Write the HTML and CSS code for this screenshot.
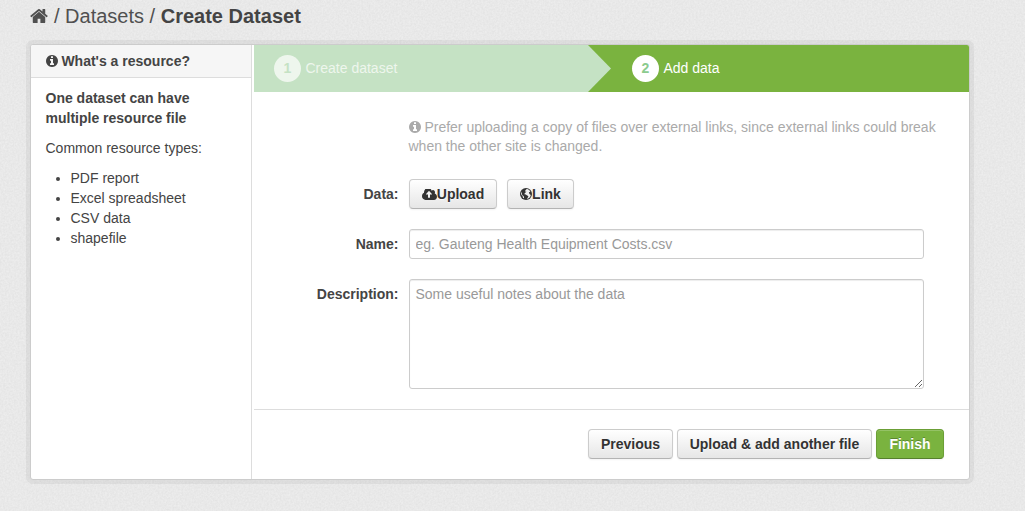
FILE: index.html
```html
<!DOCTYPE html>
<html lang="en">
<head>
<meta charset="utf-8">
<title>Create Dataset</title>
<link rel="stylesheet" href="styles.css">
</head>
<body>
<svg class="texture" aria-hidden="true">
  <filter id="grain" x="0" y="0" width="100%" height="100%" color-interpolation-filters="sRGB">
    <feTurbulence type="fractalNoise" baseFrequency="0.55" numOctaves="2" seed="4"/>
    <feColorMatrix values="0.06 0 0 0 0.882  0.06 0 0 0 0.882  0.06 0 0 0 0.882  0 0 0 0 1"/>
  </filter>
  <rect width="100%" height="100%" filter="url(#grain)"/>
</svg>
<svg class="defs" aria-hidden="true">
  <symbol id="info" viewBox="128 128 1536 1536"><path d="M1152 1376v-160q0-14-9-23t-23-9h-96v-512q0-14-9-23t-23-9h-320q-14 0-23 9t-9 23v160q0 14 9 23t23 9h96v320h-96q-14 0-23 9t-9 23v160q0 14 9 23t23 9h448q14 0 23-9t9-23zm-128-896v-160q0-14-9-23t-23-9h-192q-14 0-23 9t-9 23v160q0 14 9 23t23 9h192q14 0 23-9t9-23zm640 416q0 209-103 385.5t-279.5 279.5-385.5 103-385.5-103-279.5-279.5-103-385.5 103-385.5 279.5-279.5 385.5-103 385.5 103 279.5 279.5 103 385.5z"/></symbol>
</svg>
<div class="page">
  <nav class="breadcrumb">
    <svg class="home" viewBox="0 253 1664 1283"><path d="M1408 992v480q0 26-19 45t-45 19h-384v-384h-256v384h-384q-26 0-45-19t-19-45v-480q0-1 .5-3t.5-3l575-474 575 474q1 2 1 6zm223-69l-62 74q-8 9-21 11h-3q-13 0-21-7l-692-577-692 577q-12 8-24 7-13-2-21-11l-62-74q-8-10-7-23.5t11-21.5l719-599q32-26 76-26t76 26l244 204v-195q0-14 9-23t23-9h192q14 0 23 9t9 23v408l219 182q10 8 11 21.5t-7 23.5z"/></svg>
    <span>/ Datasets / <strong>Create Dataset</strong></span>
  </nav>
  <div class="wrapper">
    <aside class="sidebar">
      <h2 class="heading"><svg class="info"><use href="#info"/></svg> What's a resource?</h2>
      <div class="help">
        <p><strong>One dataset can have multiple resource file</strong></p>
        <p>Common resource types:</p>
        <ul><li>PDF report</li><li>Excel spreadsheet</li><li>CSV data</li><li>shapefile</li></ul>
      </div>
    </aside>
    <main class="primary">
      <ol class="stages">
        <li class="stage done"><span class="number">1</span><span class="title">Create dataset</span></li>
        <li class="stage active"><span class="number">2</span><span class="title">Add data</span></li>
      </ol>
      <form class="form">
        <p class="hint"><svg class="info"><use href="#info"/></svg> Prefer uploading a copy of files over external links, since external links could break when the other site is changed.</p>
        <div class="row">
          <span class="label">Data:</span>
          <div class="choices">
            <button type="button" class="btn"><svg class="cloud" viewBox="-64 256 1920 1280" preserveAspectRatio="none"><path d="M1216 864q0-14-9-23l-352-352q-9-9-23-9t-23 9l-351 351q-10 12-10 24 0 14 9 23t23 9h224v352q0 13 9.5 22.5t22.5 9.5h192q13 0 22.5-9.5t9.5-22.5v-352h224q13 0 22.5-9.5t9.5-22.5zm640 288q0 159-112.5 271.5t-271.5 112.5h-1088q-185 0-316.5-131.5t-131.5-316.5q0-130 70-240t188-165q-2-30-2-43 0-212 150-362t362-150q156 0 285.5 87t188.5 231q71-62 166-62 106 0 181 75t75 181q0 76-41 138 130 31 213.5 135.5t83.5 238.5z"/></svg>Upload</button>
            <button type="button" class="btn"><svg class="globe" viewBox="0 0 24 24"><circle cx="12" cy="12" r="12"/><path class="land" d="M14.5 2l-3 .8.8 1.400-2.500 1.400.4 1.800 1.800-.7.5 1.500-2.800 2-1 2.100 3 .6 2.500 2 2.700 1-1.200 3.100-2.200 3c4.300-.7 7.400-4.200 8-8.200l-2-1.500-1.800-2.600 1-1.700 2-.6C19.500 4.800 17.500 2.800 14.500 2zM3.500 7l-1.400 5 2 3.500 1.400 1.400.4 2.600 2 1.200.2-2.700-1.600-2.500-2.200-.9-.3-3.600z"/></svg>Link</button>
          </div>
        </div>
        <div class="row">
          <label class="label" for="name">Name:</label>
          <input class="field" id="name" type="text" placeholder="eg. Gauteng Health Equipment Costs.csv">
        </div>
        <div class="row">
          <label class="label" for="description">Description:</label>
          <textarea class="field area" id="description" placeholder="Some useful notes about the data"></textarea>
        </div>
        <div class="actions">
          <button type="button" class="btn">Previous</button>
          <button type="button" class="btn">Upload &amp; add another file</button>
          <button type="button" class="btn primary-btn">Finish</button>
        </div>
      </form>
    </main>
  </div>
</div>
</body>
</html>
```
FILE: styles.css
```css
* { box-sizing: border-box; }
body {
  margin: 0;
  height: 511px;
  overflow: hidden;
  background: #e8e8e8;
  color: #444;
  font: 14px/20px "Liberation Sans", Arial, sans-serif;
}
svg { fill: currentColor; }
.texture { position: absolute; inset: 0; width: 100%; height: 100%; }
.defs { position: absolute; width: 0; height: 0; }
.page { position: relative; width: 940px; margin-left: 30px; }
.breadcrumb {
  display: flex;
  align-items: center;
  gap: 6px;
  height: 44px;
  padding-bottom: 12px;
  color: #505050;
  font-size: 20px;
}
.breadcrumb strong { color: #444; }
.home { width: 18px; height: 14px; }
.wrapper {
  display: flex;
  height: 436px;
  border: 1px solid #ccc;
  border-radius: 3px;
  background: #fff;
  box-shadow: 0 0 0 4px rgba(0, 0, 0, .05);
  overflow: hidden;
}
.sidebar { width: 221px; margin-right: 2px; border-right: 1px solid #ddd; }
.heading {
  height: 33px;
  margin: 0;
  padding: 6px 14.5px;
  border-bottom: 1px solid #ddd;
  background: #f6f6f6;
  font-size: 14px;
  line-height: 20px;
}
.info { width: 12px; height: 12px; vertical-align: -1px; }
.help { padding: 10px 14.5px 0; }
.help p { margin: 0 0 10px; }
.help ul { margin: 0; padding-left: 25px; }
.primary { width: 715px; }
.stages { display: flex; height: 47px; margin: 0; padding: 0; list-style: none; }
.stage { display: flex; align-items: center; gap: 4.5px; }
.title { padding-bottom: 2px; }
.done {
  position: relative;
  width: 357px;
  padding-left: 20px;
  background: #c5e2c4;
  color: #eef6ed;
  clip-path: polygon(0 0, 334px 0, 357px 50%, 334px 100%, 0 100%);
}
.active {
  flex: 1;
  margin-left: -24px;
  padding-left: 45px;
  background: #7ab33f;
  color: #fff;
}
.number {
  width: 27px;
  height: 27px;
  border-radius: 50%;
  background: #fff;
  color: #8ccb8e;
  font-weight: bold;
  line-height: 27px;
  text-align: center;
}
.done .number { background: #eef6ed; color: #c5e2c4; }
.form { padding-top: 26px; }
.hint { width: 550px; height: 38px; margin: 0 0 23px 154.5px; color: #aaa; line-height: 19px; }
.row { display: flex; gap: 10.5px; margin-bottom: 20px; }
.label { width: 144.5px; padding-top: 5px; font-weight: bold; text-align: right; }
.choices { display: flex; gap: 10px; }
.btn {
  display: flex;
  align-items: center;
  justify-content: center;
  height: 30px;
  padding: 0 11.5px;
  border: 1px solid #ccc;
  border-bottom-color: #b3b3b3;
  border-radius: 4px;
  background: linear-gradient(#fff, #e6e6e6);
  box-shadow: inset 0 1px 0 rgba(255, 255, 255, .2), 0 1px 2px rgba(0, 0, 0, .05);
  color: #333;
  font: bold 14px/20px "Liberation Sans", Arial, sans-serif;
  text-shadow: 0 1px 1px rgba(255, 255, 255, .75);
  white-space: nowrap;
}
.choices .btn:first-child { width: 88px; }
.choices .btn:last-child { width: 67px; }
.cloud { width: 15px; height: 11px; }
.globe { width: 12px; height: 12px; }
.land { fill: #f3f3f3; }
.field {
  width: 515px;
  height: 30px;
  padding: 4px 5.5px;
  border: 1px solid #ccc;
  border-radius: 3px;
  background: #fff;
  box-shadow: inset 0 1px 1px rgba(0, 0, 0, .075);
  color: #555;
  font: 14px/20px "Liberation Sans", Arial, sans-serif;
}
.field::placeholder { color: #999; }
.area { height: 110px; }
.actions {
  display: flex;
  justify-content: flex-end;
  gap: 4px;
  padding: 19px 25px 0;
  border-top: 1px solid #ddd;
}
.actions .btn:first-child { width: 85px; }
.actions .btn:nth-child(2) { width: 195px; }
.actions .primary-btn {
  width: 68px;
  border-color: #6b9f36 #6b9f36 #56802c;
  background: #7ab33f;
  color: #fff;
  text-shadow: 0 -1px 0 rgba(0, 0, 0, .25);
}
```
